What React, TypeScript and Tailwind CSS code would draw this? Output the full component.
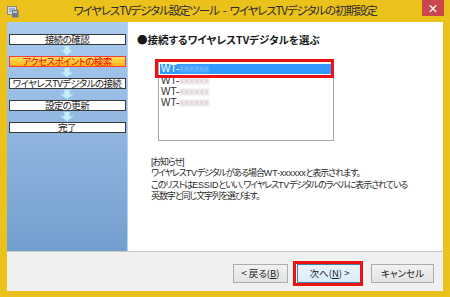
import React from 'react';

const jp = "font-['Noto_Sans_CJK_JP','Noto_Sans',sans-serif] [font-feature-settings:'palt']";
const jpTight = "font-['Liberation_Sans','Noto_Sans_CJK_JP',sans-serif] [font-feature-settings:'palt']";

const steps = [
  { label: '接続の確認', active: false },
  { label: 'アクセスポイントの検索', active: true },
  { label: 'ワイヤレスTVデジタルの接続', active: false },
  { label: '設定の更新', active: false },
  { label: '完了', active: false },
];

function DownArrow() {
  return (
    <svg width="16" height="11" viewBox="0 0 16 11" className="block">
      <path d="M5 0.5 H11 V5 H15 L8 10.5 L1 5 H5 Z" fill="#c8ecfa" stroke="#8fd0ec" strokeWidth="1" />
    </svg>
  );
}

function AppIcon() {
  return (
    <svg width="12" height="12" viewBox="0 0 12 12">
      <rect x="0.5" y="0.5" width="9" height="8" fill="#d9d9d9" stroke="#8a8a8a" />
      <rect x="2" y="2" width="6" height="4" fill="#9fb4c8" />
      <rect x="5" y="4" width="6.5" height="7.5" fill="#6e7a88" />
      <rect x="6" y="5" width="4" height="2" fill="#b8c4d0" />
    </svg>
  );
}

function Masked({ selected }: { selected?: boolean }) {
  return (
    <span
      className={
        'inline-block blur-[1px] ' + (selected ? 'text-[#a8d0ff]' : 'text-[#b9a4ac]')
      }
    >
      xxxxxx
    </span>
  );
}

// latin runs keep normal spacing inside the tightened notice text
function L({ children }: { children: React.ReactNode }) {
  return <span className="tracking-[-0.2px]">{children}</span>;
}

export default function App() {
  return (
    <div className={`w-[450px] h-[297px] bg-[#ebc11b] flex flex-col ${jp}`}>
      {/* title bar */}
      <div className="h-[22px] flex items-center relative">
        <div className="ml-[7px] mt-[1px]">
          <AppIcon />
        </div>
        <div className="flex-1 text-center text-[11.5px] leading-none tracking-[-1.1px] whitespace-nowrap text-[#2b2b2b] pr-[19px]">
          ワイヤレスTVデジタル設定ツール<span className="mx-[4px]">-</span>ワイヤレスTVデジタルの初期設定
        </div>
        <div className="absolute right-[6px] top-0 w-[22px] h-[16px] bg-[#c8464c] flex items-center justify-center text-white text-[11px] font-bold leading-none">
          ×
        </div>
      </div>

      {/* body */}
      <div className="mx-[7px] flex-1 flex flex-col bg-[#f0f0f0]">
        <div className="h-[229px] flex">
          <div className="w-[121px] bg-gradient-to-b from-[#abcbef] to-[#739fcf] border-r border-[#b9d2ec] pt-[12px] px-[1px] flex flex-col items-center">
            {steps.map((s, i) => (
              <React.Fragment key={s.label}>
                <div
                  className={
                    'w-[117px] h-[11px] flex items-center justify-center text-[9.5px] leading-none tracking-[-0.6px] whitespace-nowrap border ' +
                    (s.active
                      ? 'bg-gradient-to-b from-[#ffe25a] to-[#ffb400] border-[#ff3b3b] text-[#e8000b]'
                      : 'bg-white border-[#3a3a3a] text-[#1a1a1a]')
                  }
                >
                  {s.label}
                </div>
                {i < steps.length - 1 && (
                  <div className="h-[11px] flex items-center">
                    <DownArrow />
                  </div>
                )}
              </React.Fragment>
            ))}
          </div>

          <div className="flex-1 bg-white relative pl-[9px] pt-[13px]">
            <div className="text-[10.5px] font-bold leading-none text-[#1a1a1a] whitespace-nowrap">
              ●接続するワイヤレスTVデジタルを選ぶ
            </div>

            <div className="ml-[21px] mt-[14px] w-[176px] h-[81px] border border-[#a8a8a8] pt-[3px] px-[1px] font-['Liberation_Sans',sans-serif] text-[10px] leading-[11px] text-[#333]">
              <div className="h-[10px] bg-[#3399ff] text-white pl-[1px] flex items-center">
                WT-<Masked selected />
              </div>
              <div className="pl-[1px] mt-[1px]">WT-<Masked /></div>
              <div className="pl-[1px]">WT-<Masked /></div>
              <div className="pl-[1px]">WT-<Masked /></div>
            </div>

            {/* annotation highlight */}
            <div className="absolute left-[27px] top-[37px] w-[179px] h-[19px] border-[3px] border-[#ee1111]" />

            <div className={`mt-[16px] ml-[14px] text-[9px] leading-[11.6px] tracking-[-1.1px] whitespace-nowrap text-[#2a2a2a] ${jpTight}`}>
              <div>[お知らせ]</div>
              <div>ワイヤレス<L>TV</L>デジタルがある場合<L>WT-xxxxxx</L>と表示されます。</div>
              <div>このリストは<L>ESSID</L>といい、ワイヤレス<L>TV</L>デジタルのラベルに表示されている</div>
              <div>英数字と同じ文字列を選びます。</div>
            </div>
          </div>
        </div>

        {/* footer */}
        <div className="flex-1 border-t border-[#c9c9c9] flex items-start justify-end pt-[12px] pr-[9px] relative">
          <div className="flex gap-[9px] text-[9.5px] leading-none text-[#1a1a1a]">
            <button className="w-[55px] h-[19px] border border-[#adadad] bg-gradient-to-b from-[#f2f2f2] to-[#e3e3e3] flex items-center justify-center">
              &lt; 戻る(<span className="underline">B</span>)
            </button>
            <button className="w-[65px] h-[19px] border border-[#3c7fb1] bg-gradient-to-b from-[#eaf5fd] to-[#d9ecfb] flex items-center justify-center">
              次へ(<span className="underline">N</span>) &gt;
            </button>
            <button className="w-[63px] h-[19px] border border-[#adadad] bg-gradient-to-b from-[#f2f2f2] to-[#e3e3e3] flex items-center justify-center">
              キャンセル
            </button>
          </div>
          <div className="absolute left-[286px] top-[9px] w-[70px] h-[25px] border-[3px] border-[#ee1111]" />
        </div>
      </div>
      <div className="h-[6px]" />
    </div>
  );
}
